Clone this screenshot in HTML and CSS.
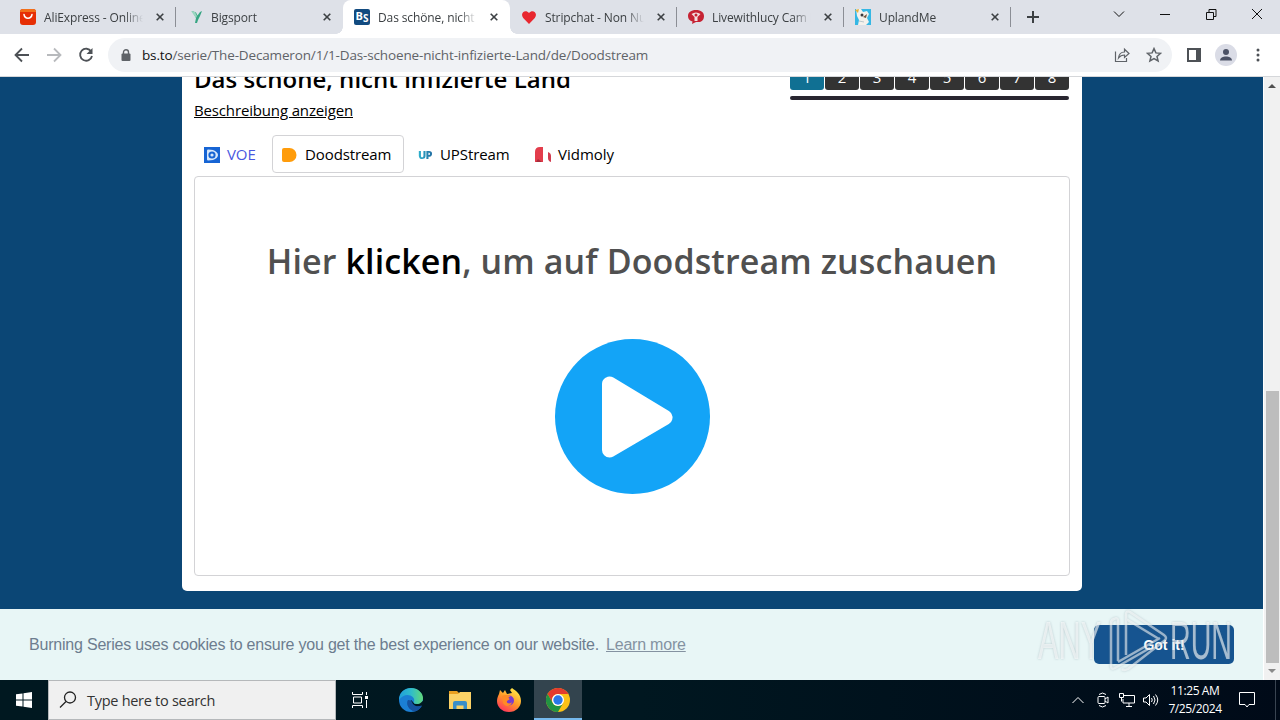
FILE: index.html
```html
<!DOCTYPE html>
<html lang="de">

<head>
  <meta charset="UTF-8" />
  <meta name="viewport" content="width=device-width, initial-scale=1.0" />
  <title>Das schöne, nicht infizierte Land</title>
  <link rel="stylesheet" href="styles.css">
</head>

<body>
  <!-- Tab strip -->
  <div class="tabstrip">
    <div class="tab">
      <svg class="favicon" viewBox="0 0 16 16"><rect width="16" height="16" rx="3" fill="#e62e04"/><path d="M0 3a3 3 0 0 1 3-3h10a3 3 0 0 1 3 3z" fill="#f2701a"/><path d="M4 5.500c1 5 7 5 8 0" fill="none" stroke="#fff" stroke-width="1.500" stroke-linecap="round"/></svg>
      <span class="tab-title">AliExpress - Online</span>
      <svg class="close" viewBox="0 0 8 8"><path d="M.7.7l6.600 6.600M7.300.7L.7 7.300"/></svg>
    </div>
    <div class="tab">
      <svg class="favicon" viewBox="0 0 16 16"><path d="M5 2l4 1.500 1.500 3L13 3l2-1-2 5-2 4-1 3H8l1-5z" fill="#36a582"/><path d="M4 2l4 1 2 4-1 2z" fill="#9bd6c0"/></svg>
      <span class="tab-title">Bigsport</span>
      <svg class="close" viewBox="0 0 8 8"><path d="M.7.7l6.600 6.600M7.300.7L.7 7.300"/></svg>
    </div>
    <div class="tab active">
      <span class="favicon bs-icon"><b>B</b><b class="low">S</b></span>
      <span class="tab-title">Das schöne, nicht i</span>
      <svg class="close" viewBox="0 0 8 8"><path d="M.7.7l6.600 6.600M7.300.7L.7 7.300"/></svg>
    </div>
    <div class="tab">
      <svg class="favicon" viewBox="0 0 16 16"><path d="M8 15L2.200 9C-1.500 4 4.500-.5 8 4c3.500-4.500 9.500 0 5.800 5z" fill="#e8272f"/></svg>
      <span class="tab-title">Stripchat - Non Nu</span>
      <svg class="close" viewBox="0 0 8 8"><path d="M.7.7l6.600 6.600M7.300.7L.7 7.300"/></svg>
    </div>
    <div class="tab">
      <svg class="favicon" viewBox="0 0 16 16"><path d="M8 1c5 0 8 2.500 8 6s-2 6-5 6H8l-4 2 .5-2.500C1.500 11.500 0 10 0 7c0-3.500 3-6 8-6z" fill="#c62334"/><path d="M3.500 5c3-2 6-2 9 0L9.500 8v4h-3V8z" fill="#f3dfe0"/><circle cx="8" cy="6" r="1.500" fill="#c62334"/></svg>
      <span class="tab-title">Livewithlucy Cam P</span>
      <svg class="close" viewBox="0 0 8 8"><path d="M.7.7l6.600 6.600M7.300.7L.7 7.300"/></svg>
    </div>
    <div class="tab">
      <svg class="favicon" viewBox="0 0 16 16"><rect width="16" height="16" fill="#35b7e4"/><path d="M1 0h5l2 3 4-1 2 3-2 4 2 4-3 3H3l1-5-2-4z" fill="#f4f1ec"/><path d="M0 1l4-1-1 4z" fill="#e8b13a"/><circle cx="7" cy="6" r="1.500" fill="#3c3a3d"/><path d="M8 8l4-3-1 4z" fill="#71533d"/><path d="M4 12l5 1" stroke="#b9c7cc"/></svg>
      <span class="tab-title">UplandMe</span>
      <svg class="close" viewBox="0 0 8 8"><path d="M.7.7l6.600 6.600M7.300.7L.7 7.300"/></svg>
    </div>
    <svg class="new-tab" viewBox="0 0 12 12"><path d="M6 0v12M0 6h12"/></svg>
    <div class="window-buttons">
      <svg viewBox="0 0 12 12"><path d="M1 3.500l5 5 5-5"/></svg>
      <svg viewBox="0 0 12 12"><path d="M1 6.500h10"/></svg>
      <svg viewBox="0 0 12 12"><path d="M1.500 4.500h7v7h-7zM4 4V1.500h7v7H9"/></svg>
      <svg viewBox="0 0 12 12"><path d="M1 1l10 10M11 1L1 11"/></svg>
    </div>
  </div>

  <!-- Toolbar -->
  <div class="toolbar">
    <svg class="nav" viewBox="0 0 16 16"><path d="M15 8H2M8 1.500L1.500 8 8 14.500"/></svg>
    <svg class="nav disabled" viewBox="0 0 16 16"><path d="M1 8h13M8 1.500L14.500 8 8 14.500"/></svg>
    <svg class="nav" viewBox="0 0 16 16"><path d="M13.200 4.500A6 6 0 1 0 14 9"/><path class="solid" d="M14.500 1v6h-6z"/></svg>
    <div class="address">
      <svg class="lock" viewBox="0 0 10 12"><rect x=".5" y="4.500" width="9" height="7.500" rx="1" fill="#5f6368"/><path d="M2.500 5V3.200a2.500 2.500 0 0 1 5 0V5" fill="none" stroke="#5f6368" stroke-width="1.400"/></svg>
      <span class="url"><span class="host">bs.to</span>/serie/The-Decameron/1/1-Das-schoene-nicht-infizierte-Land/de/Doodstream</span>
      <svg class="share" viewBox="0 0 16 16"><path d="M1.500 4.500v10h11V11M4.500 11c.5-4 2.500-6 6-6V2.200L15 6.500l-4.500 4V8C8 8 6 9 4.500 11z"/></svg>
      <svg class="star" viewBox="0 0 16 16"><path d="M8 1.600l1.900 4.300 4.700.4-3.600 3.100 1.100 4.600L8 11.600 3.900 14 5 9.400 1.400 6.300l4.700-.4z"/></svg>
    </div>
    <svg class="panel" viewBox="0 0 14 14"><rect x="1" y="1" width="12" height="12" fill="none" stroke="#4d5156" stroke-width="2"/><path d="M9 1h4v12H9z" fill="#4d5156"/></svg>
    <svg class="avatar" viewBox="0 0 22 22"><circle cx="11" cy="11" r="11" fill="#dadce6"/><circle cx="11" cy="8" r="3" fill="#4c5266"/><path d="M5 16.500c0-5.500 12-5.500 12 0z" fill="#4c5266"/></svg>
    <svg class="dots" viewBox="0 0 4 14"><circle cx="2" cy="2" r="1.500"/><circle cx="2" cy="7" r="1.500"/><circle cx="2" cy="12" r="1.500"/></svg>
  </div>

  <!-- Page -->
  <div class="viewport">
    <div class="page">
      <main class="card">
        <header class="episode-header">
          <div>
            <h2>Das schöne, nicht infizierte Land</h2>
            <a class="description">Beschreibung anzeigen</a>
          </div>
          <div class="episodes">
            <ul class="episode-list">
              <li class="active">1</li>
              <li>2</li>
              <li>3</li>
              <li>4</li>
              <li>5</li>
              <li>6</li>
              <li>7</li>
              <li>8</li>
            </ul>
            <div class="episode-line"></div>
          </div>
        </header>

        <ul class="hosters">
          <li class="voe">
            <svg viewBox="0 0 16 16"><rect width="16" height="16" fill="#1664d4"/><path d="M4 2.500L9 3c3 1 5 3 5 5s-2 4-5 5l-5 .5c-1 0-1-1-1-2v-7c0-1 0-2 1-2z" fill="#d6e7fb"/><circle cx="8" cy="8" r="2.600" fill="none" stroke="#1664d4" stroke-width="2"/></svg>
            <span>VOE</span>
          </li>
          <li class="active">
            <svg viewBox="0 0 16 16"><path d="M0 3q0-2 2-2h5.500a7 7 0 0 1 0 14H2q-2 0-2-2z" fill="#ff9c0b"/></svg>
            <span>Doodstream</span>
          </li>
          <li class="upstream">
            <span class="up-icon">UP</span>
            <span>UPStream</span>
          </li>
          <li class="vidmoly">
            <svg viewBox="0 0 16 16"><path d="M0 15V5q0-5 5-5h3v15z" fill="#e33d4c"/><path d="M13 5q3 1 3 4v6q-3-1-3-4z" fill="#d13c50"/><path d="M3 12l4 3H1z" fill="#a82d3c"/></svg>
            <span>Vidmoly</span>
          </li>
        </ul>

        <section class="player">
          <h3>Hier <b>klicken</b>, um auf Doodstream zuschauen</h3>
          <svg class="play" viewBox="0 0 155 155"><circle cx="77.500" cy="77.500" r="77.500" fill="#13a4f7"/><path d="M54.500 45v66L110 78.500z" fill="#fff" stroke="#fff" stroke-width="15" stroke-linejoin="round"/></svg>
        </section>
      </main>

      <div class="cookies">
        <span class="cookie-text">Burning Series uses cookies to ensure you get the best experience on our website.</span>
        <a class="learn-more">Learn more</a>
        <button class="got-it">Got it!</button>
      </div>

      <div class="watermark">
        <span class="wm-any">ANY</span>
        <svg viewBox="0 0 62 66"><path d="M10 53V13q0-4-4-2-3 1-3 4v43q0 4 4 2l35-20M18 47V7q0-5 4-3l34 23q4 3 0 6L20 61q-4 2-6 0M18 11l33 20M10 54l42-24"/></svg>
        <span class="wm-run">RUN</span>
      </div>
    </div>
    <div class="scrollbar">
      <svg viewBox="0 0 8 4"><path d="M0 4l4-4 4 4z" fill="#505050"/></svg>
      <div class="thumb"></div>
      <svg viewBox="0 0 8 4"><path d="M0 0l4 4 4-4z" fill="#8a8a8a"/></svg>
    </div>
  </div>

  <!-- Taskbar -->
  <footer class="taskbar">
    <div class="start">
      <svg viewBox="0 0 16 16"><path d="M0 2.300L6.500 1.400v6.100H0zM7.500 1.200L16 0v7.500H7.500zM0 8.500h6.500v6.100L0 13.700zM7.500 8.500H16V16l-8.500-1.200z" fill="#fff"/></svg>
    </div>
    <div class="search">
      <svg viewBox="0 0 18 18"><circle cx="11" cy="6.500" r="5.500"/><path d="M7 10.500L1 16.500"/></svg>
      <span>Type here to search</span>
    </div>
    <div class="task">
      <svg class="taskview" viewBox="0 0 16 16"><path d="M.5 0v2.500h10V0M.5 16v-2.500h10V16M1.500 5h8v6h-8zM14.500 0v3M14.500 8v8"/><path d="M13 4h3v3h-3z" fill="#fff" stroke="none"/></svg>
    </div>
    <div class="task">
      <svg class="app" viewBox="0 0 24 24">
        <defs>
          <linearGradient id="edge-top" x1="0" x2="1"><stop offset="0" stop-color="#209edb"/><stop offset=".5" stop-color="#2fbccb"/><stop offset="1" stop-color="#62d97a"/></linearGradient>
        </defs>
        <circle cx="12" cy="12" r="12" fill="#1b7fd4"/>
        <path d="M9 12c-2 5 1 10 7 11.300C20 22 22 20 23 17.500c-5 2-10 0-10-4.500z" fill="#15529f"/>
        <path d="M12 12c-1 4 2 7 7 6.500l5-1V13l-8 3z" fill="#001822"/>
        <path d="M9 12c-2 5 1 10 7 11.300C20 22 22 20 22.500 17.500c-4 2-9 0-9.500-4z" fill="#15529f"/>
        <path d="M0 12C0 4 6 0 12 0c7 0 12 5 12 10 0 4-3 6-6 6-3 0-4-1-3-2.500C17 8 6 3 0 12z" fill="url(#edge-top)"/>
      </svg>
    </div>
    <div class="task">
      <svg class="app" viewBox="0 0 24 24"><path d="M1 3h8l2 2h12v4H1z" fill="#e9a020"/><path d="M1 6h9l2-2h11v17H1z" fill="#fbd266"/><path d="M5 21v-6q0-2 2-2h10q2 0 2 2v6h-3.500v-3.500h-7V21z" fill="#3a8fca"/></svg>
    </div>
    <div class="task">
      <svg class="app" viewBox="0 0 24 24">
        <defs>
          <linearGradient id="fox" x1=".8" y1="0" x2=".2" y2="1"><stop offset="0" stop-color="#fff04a"/><stop offset=".5" stop-color="#ff9828"/><stop offset="1" stop-color="#ff2c60"/></linearGradient>
        </defs>
        <path d="M2 6l1-4 3 3 2-3 2 4 5-1-2-3 2-2c4 3 9 6 9 13 0 6-5 11-12 11S0 19 0 13c0-3 1-5 2-7z" fill="url(#fox)"/>
        <circle cx="12" cy="12.500" r="5" fill="#793bd0"/>
        <path d="M5 8c3-2 7-1 9 1-3-1-3 1-1 2l-3 2c-1 3 4 3 5 1-1 5-7 5-9 1z" fill="#ff8b25"/>
      </svg>
    </div>
    <div class="task active">
      <svg class="app" viewBox="0 0 24 24"><circle cx="12" cy="12" r="12" fill="#fbc116"/><path d="M1.600 6A12 12 0 0 1 22.400 6H12a6 6 0 0 0-5.200 9z" fill="#e33b2e"/><path d="M1.600 6A12 12 0 0 0 12 24l5.200-9A6 6 0 0 1 6.800 15z" fill="#229342"/><circle cx="12" cy="12" r="6" fill="#fff"/><circle cx="12" cy="12" r="4.700" fill="#2a78e8"/></svg>
    </div>
    <div class="tray">
      <svg class="chevron" viewBox="0 0 12 8"><path d="M.5 7L6 1.500 11.500 7"/></svg>
      <svg class="meet" viewBox="0 0 12 16"><rect x="1" y="4.500" width="7" height="7" rx="1"/><path d="M8 7l3-2v6L8 9M2 2.500Q5.500-.5 9 2.500M2 13.500q3.500 3 7 0"/></svg>
      <svg class="net" viewBox="0 0 16 14"><path d="M5 2.500h10.500v7.500H4V6M7 13.500h6M10 10v3.500M.5.500h4v4h-4zM2.500 4.500v4"/></svg>
      <svg class="sound" viewBox="0 0 16 14"><path d="M.5 5h2.500l3.500-3.500v11L3 9H.5zM8.500 5q1.500 2 0 4M10.500 3q3 4 0 8M12.500 1.500q4.500 5.500 0 11"/></svg>
      <div class="clock"><span>11:25 AM</span><span>7/25/2024</span></div>
      <svg class="notice" viewBox="0 0 16 16"><path d="M.5.500h15v12H10L8 15l-2-2.500H.5z"/></svg>
      <span class="peek"></span>
    </div>
  </footer>
</body>

</html>
```
FILE: styles.css
```css
* {
  box-sizing: border-box;
  margin: 0;
  padding: 0;
}

body {
  width: 1280px;
  height: 720px;
  overflow: hidden;
  display: flex;
  flex-direction: column;
  font-family: "Open Sans", "Noto Sans", sans-serif;
  background: #fff;
  color: #000;
}

ul {
  list-style: none;
}

svg {
  flex-shrink: 0;
  display: block;
}

/* Tab strip */
.tabstrip {
  height: 34px;
  flex-shrink: 0;
  display: flex;
  align-items: center;
  padding-left: 9px;
  background: #dee1e8;
}

.tab {
  position: relative;
  width: 167px;
  height: 34px;
  display: flex;
  align-items: center;
  padding: 0 12px 0 11px;
  background: linear-gradient(#8b8e95, #8b8e95) right center / 1px 20px no-repeat;
}

.tab:nth-child(2) {
  background: none;
}

.tab.active {
  background: #fff;
  border-radius: 8px 8px 0 0;
}

/* flared feet of the active tab */
.tab.active::before,
.tab.active::after {
  content: "";
  position: absolute;
  bottom: 0;
  width: 7px;
  height: 7px;
}

.tab.active::before {
  left: -7px;
  background: radial-gradient(circle at 0 0, transparent 6.5px, #fff 7px);
}

.tab.active::after {
  right: -7px;
  background: radial-gradient(circle at 100% 0, transparent 6.5px, #fff 7px);
}

.favicon {
  width: 16px;
  height: 16px;
  margin-right: 8px;
}

.bs-icon {
  display: flex;
  flex-shrink: 0;
  justify-content: center;
  background: #124b80;
  border-radius: 2px;
  color: #fff;
  font-size: 11px;
  line-height: 13px;
}

.bs-icon .low {
  padding-top: 3px;
  font-size: 10px;
}

.tab-title {
  width: 101px;
  font-size: 12px;
  letter-spacing: -0.12px;
  line-height: 17px;
  white-space: nowrap;
  color: #3c4043;
  -webkit-mask-image: linear-gradient(90deg, #000 80%, transparent 98%);
  mask-image: linear-gradient(90deg, #000 80%, transparent 98%);
}

.close {
  width: 8px;
  height: 8px;
  margin-left: auto;
  stroke: #3c4043;
  stroke-width: 1.6;
}

.new-tab {
  width: 12px;
  height: 12px;
  margin-left: 16px;
  stroke: #3c4043;
  stroke-width: 2;
}

.window-buttons {
  display: flex;
  gap: 34px;
  margin-left: auto;
  margin-right: 17px;
  padding-bottom: 6px;
}

.window-buttons svg {
  width: 12px;
  height: 12px;
  fill: none;
  stroke: #111;
}

/* Toolbar */
.toolbar {
  height: 43px;
  flex-shrink: 0;
  display: flex;
  align-items: center;
  padding: 0 20px 0 14px;
  border-bottom: 1px solid #d5d7da;
}

.nav {
  width: 16px;
  height: 16px;
  margin-right: 16px;
  fill: none;
  stroke: #4d5156;
  stroke-width: 1.8;
}

.nav.disabled {
  stroke: #b8babd;
}

.nav .solid {
  fill: #4d5156;
  stroke: none;
}

.address {
  width: 1064px;
  height: 34px;
  display: flex;
  align-items: center;
  margin-left: -2px;
  padding: 0 10px 0 13px;
  border-radius: 17px;
  background: #f0f2f5;
}

.lock {
  width: 10px;
  height: 12px;
  margin-right: 11px;
}

.url {
  font-size: 13.5px;
  letter-spacing: -0.15px;
  white-space: nowrap;
  color: #5f6368;
}

.url .host {
  color: #111;
}

.share,
.star {
  width: 16px;
  height: 16px;
  fill: none;
  stroke: #5f6368;
  stroke-width: 1.2;
}

.share {
  margin-left: auto;
  margin-right: 16px;
}

.star {
  stroke-width: 1.5;
}

.panel {
  width: 14px;
  height: 14px;
  margin-left: 15px;
}

.avatar {
  width: 22px;
  height: 22px;
  margin-left: 14px;
}

.dots {
  width: 4px;
  height: 14px;
  margin-left: auto;
  fill: #4d5156;
}

/* Page */
.viewport {
  height: 603px;
  flex-shrink: 0;
  display: flex;
  overflow: hidden;
}

.page {
  position: relative;
  width: 1263px;
  height: 603px;
  display: flex;
  flex-direction: column;
  overflow: hidden;
  background: #0b4675;
}

.card {
  width: 900px;
  height: 544px;
  flex-shrink: 0;
  margin: -30px auto 18px 182px;
  padding: 15px 12px;
  border-radius: 5px;
  background: #fff;
}

.episode-header {
  height: 73px;
  display: flex;
  justify-content: space-between;
}

.episode-header h2 {
  height: 36px;
  font-size: 24px;
  font-weight: 600;
  letter-spacing: 0.03px;
  line-height: 34px;
  white-space: nowrap;
}

.description {
  display: inline-block;
  font-size: 15px;
  letter-spacing: -0.15px;
  line-height: 24px;
  text-decoration: underline;
}

.episodes {
  width: 279px;
  margin-right: 1px;
}

.episode-list {
  display: flex;
  gap: 1px;
}

.episode-list li {
  width: 34px;
  height: 28px;
  border-radius: 3px;
  background: #333;
  color: #fff;
  font-size: 15px;
  line-height: 30px;
  text-align: center;
}

.episode-list .active {
  background: #107093;
}

.episode-line {
  height: 4px;
  margin-top: 6px;
  border-radius: 2px;
  background: #292630;
}

.hosters {
  display: flex;
  height: 38px;
  margin-bottom: 3px;
}

.hosters li {
  height: 38px;
  display: flex;
  align-items: center;
  gap: 7px;
  padding: 0 9px;
  border: 1px solid transparent;
  border-radius: 4px;
  font-size: 15px;
  letter-spacing: -0.1px;
  white-space: nowrap;
}

.hosters svg {
  width: 16px;
  height: 16px;
  margin-top: 1px;
}

.hosters .voe {
  width: 78px;
  color: #4a57df;
}

.hosters .active {
  width: 132px;
  border-color: #d3d3d6;
}

.hosters .upstream {
  width: 117px;
  padding-left: 13px;
}

.hosters .vidmoly {
  padding-left: 13px;
  letter-spacing: 0;
}

.up-icon {
  width: 15px;
  background: linear-gradient(90deg, #2fb4cf, #20699f);
  -webkit-background-clip: text;
  background-clip: text;
  color: transparent;
  font-size: 11px;
  font-weight: 800;
  letter-spacing: -0.8px;
}

.player {
  height: 400px;
  display: flex;
  flex-direction: column;
  align-items: center;
  border: 1px solid #d3d3d6;
  border-radius: 4px;
}

.player h3 {
  margin-top: 60px;
  font-size: 34px;
  font-weight: 600;
  letter-spacing: 0.11px;
  line-height: 48px;
  white-space: nowrap;
  color: #505050;
}

.player h3 b {
  color: #000;
  font-weight: 600;
}

.play {
  width: 155px;
  height: 155px;
  margin-top: 54px;
}

/* Cookie notice */
.cookies {
  height: 71px;
  flex-shrink: 0;
  display: flex;
  align-items: center;
  padding: 0 29px;
  background: #e8f6f6;
  color: #6d7d8f;
  font-family: "Liberation Sans", Arial, sans-serif;
  font-size: 16px;
  letter-spacing: -0.21px;
}

.learn-more {
  margin-left: 7px;
  color: #8492a1;
  text-decoration: underline;
}

.got-it {
  width: 140px;
  height: 39px;
  margin-left: auto;
  border: none;
  border-radius: 5px;
  background: #165490;
  color: #fff;
  font-family: "Liberation Sans", Arial, sans-serif;
  font-size: 14px;
  font-weight: bold;
}

.watermark {
  position: absolute;
  left: 1038px;
  top: 531px;
  display: flex;
  align-items: center;
  color: rgba(255, 255, 255, 0.6);
  font-family: "Liberation Sans", Arial, sans-serif;
  font-size: 53px;
  line-height: 66px;
  filter: drop-shadow(0 0 1px rgba(80, 105, 120, 0.5));
}

.watermark span {
  width: 70px;
  transform: scaleX(0.58);
  transform-origin: left;
}

.watermark .wm-run {
  transform: scaleX(0.54);
}

.watermark svg {
  width: 62px;
  height: 66px;
  fill: none;
  stroke: rgba(255, 255, 255, 0.55);
  stroke-width: 2.5;
}

.scrollbar {
  width: 17px;
  flex-shrink: 0;
  display: flex;
  flex-direction: column;
  align-items: center;
  justify-content: space-between;
  padding: 7px 0;
  border-left: 1px solid #fff;
  background: #f1f1f1;
}

.scrollbar svg {
  width: 8px;
  height: 4px;
}

.thumb {
  width: 13px;
  height: 272px;
  margin-top: auto;
  margin-bottom: 6px;
  background: #bdbdbd;
}

/* Taskbar */
.taskbar {
  height: 40px;
  flex-shrink: 0;
  display: flex;
  align-items: center;
  background: linear-gradient(90deg, #001820 0%, #001720 50%, #000a18 100%);
  color: #fff;
}

.start {
  width: 48px;
  display: flex;
  justify-content: center;
}

.start svg {
  width: 16px;
  height: 16px;
}

.search {
  width: 288px;
  height: 40px;
  display: flex;
  align-items: center;
  gap: 10px;
  padding-left: 10px;
  border: 1px solid #b5b8ba;
  background: #f0f0f0;
  color: #333;
  font-size: 14.5px;
  letter-spacing: -0.28px;
}

.search svg {
  width: 18px;
  height: 18px;
  fill: none;
  stroke: #222;
  stroke-width: 1.3;
}

.task {
  width: 48px;
  height: 40px;
  display: flex;
  align-items: center;
  justify-content: center;
}

.task:nth-child(4) {
  margin-left: 3px;
}

.task.active {
  padding-top: 2px;
  background: #33444e;
  border-bottom: 2px solid #76b9ed;
}

.task:nth-child(n+5) {
  margin-left: 1px;
}

.taskview {
  width: 16px;
  height: 16px;
  fill: none;
  stroke: #fff;
}

.app {
  width: 24px;
  height: 24px;
}

.tray {
  height: 40px;
  display: flex;
  align-items: center;
  margin-left: auto;
}

.tray svg {
  fill: none;
  stroke: #fff;
}

.chevron {
  width: 12px;
  height: 8px;
  margin-right: 13px;
}

.meet {
  width: 12px;
  height: 16px;
  margin-right: 10px;
}

.net {
  width: 16px;
  height: 14px;
  margin-right: 8px;
}

.sound {
  width: 16px;
  height: 14px;
}

.clock {
  width: 72px;
  display: flex;
  flex-direction: column;
  align-items: center;
  font-size: 12px;
  letter-spacing: -0.4px;
  line-height: 18px;
}

.notice {
  width: 16px;
  height: 16px;
  margin-left: 8px;
}

.peek {
  width: 1px;
  height: 40px;
  margin-left: 20px;
  margin-right: 4px;
  background: #394451;
}
```
